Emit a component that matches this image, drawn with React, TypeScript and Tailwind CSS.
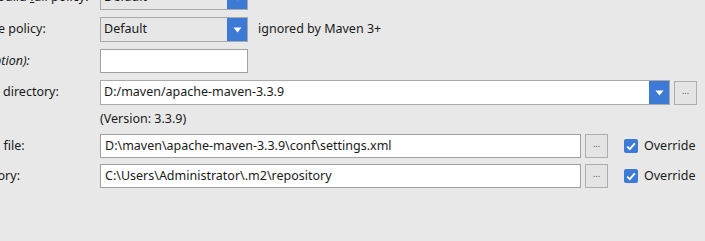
import React from "react";

const font = { fontFamily: '"Noto Sans", "Open Sans", sans-serif' };

const Arrow = () => (
  <svg width="9" height="6" viewBox="0 0 9 6">
    <path d="M0.5 0.5 L8.5 0.5 L4.5 5.5 Z" fill="#ffffff" />
  </svg>
);

const Combo = ({ value, editable = false }: { value: string; editable?: boolean }) => (
  <div
    className={`flex h-[25px] w-full items-stretch border border-[#a9a9a9] ${
      editable ? "bg-white" : "bg-[#e6e6e6]"
    }`}
  >
    <div className="flex flex-1 items-center pl-[3px] text-[12.5px] text-[#1a1a1a]">{value}</div>
    <div className="flex w-[20px] items-center justify-center bg-[#3c7ad6]">
      <Arrow />
    </div>
  </div>
);

const TextBox = ({ value, w }: { value: string; w: string }) => (
  <div
    className={`flex h-[24px] items-center border border-[#a0a0a0] bg-white pl-[4px] text-[12.5px] text-[#1a1a1a] ${w}`}
  >
    {value}
  </div>
);

const Browse = () => (
  <div className="flex h-[24px] w-[23px] shrink-0 items-center justify-center border border-[#adadad] bg-[#e4e4e4] pb-[4px] text-[9px] text-[#555]">
    ...
  </div>
);

const Override = () => (
  <div className="ml-[16px] flex items-center gap-[6px] text-[12.5px] text-[#1a1a1a]">
    <div className="flex h-[14px] w-[14px] items-center justify-center rounded-[2px] bg-[#3c7ad6]">
      <svg width="10" height="9" viewBox="0 0 10 9">
        <path d="M1.2 4.6 L3.8 7.2 L8.8 1.4" stroke="#fff" strokeWidth="1.9" fill="none" />
      </svg>
    </div>
    <span>Override</span>
  </div>
);

const Label = ({ children, italic = false }: { children: React.ReactNode; italic?: boolean }) => (
  <div className={`w-[186px] shrink-0 pl-[9px] text-[12.5px] text-[#1a1a1a] ${italic ? "italic" : ""}`}>
    {children}
  </div>
);

export default function App() {
  return (
    <div className="h-[241px] w-[705px] overflow-hidden bg-[#e8e8e8]" style={font}>
      <div className="ml-[-86px] mt-[-15px] flex flex-col">
        <div className="flex items-center">
          <Label>
            Multiproject build <span className="underline">f</span>ail policy:
          </Label>
          <div className="w-[148px]">
            <Combo value="Default" />
          </div>
        </div>

        <div className="mt-[7px] flex items-center">
          <Label>Plugin update policy:</Label>
          <div className="w-[148px]">
            <Combo value="Default" />
          </div>
          <span className="ml-[10px] text-[12.5px] text-[#1a1a1a]">ignored by Maven 3+</span>
        </div>

        <div className="mt-[7px] flex items-center">
          <Label italic>Threads (-T option):</Label>
          <TextBox value="" w="w-[148px] h-[23px]" />
        </div>

        <div className="mt-[7px] flex items-center">
          <Label>Maven home directory:</Label>
          <div className="w-[570px]">
            <Combo value="D:/maven/apache-maven-3.3.9" editable />
          </div>
          <div className="ml-[4px]">
            <Browse />
          </div>
        </div>

        <div className="flex h-[28px] items-center">
          <Label>{""}</Label>
          <span className="text-[12.5px] text-[#1a1a1a]">(Version: 3.3.9)</span>
        </div>

        <div className="mt-[1px] flex items-center">
          <Label>User settings file:</Label>
          <TextBox value="D:\maven\apache-maven-3.3.9\conf\settings.xml" w="w-[481px]" />
          <div className="ml-[4px]">
            <Browse />
          </div>
          <Override />
        </div>

        <div className="mt-[6px] flex items-center">
          <Label>Local repository:</Label>
          <TextBox value="C:\Users\Administrator\.m2\repository" w="w-[481px]" />
          <div className="ml-[4px]">
            <Browse />
          </div>
          <Override />
        </div>
      </div>
    </div>
  );
}
